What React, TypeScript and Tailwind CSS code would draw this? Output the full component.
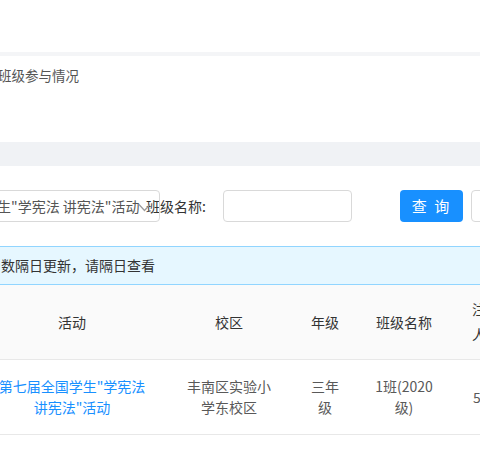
import React from "react";

export default function App() {
  const font = { fontFamily: '"Noto Sans CJK SC", "Noto Sans", sans-serif' };
  return (
    <div
      className="w-[480px] h-[454px] overflow-hidden bg-white relative text-[14px]"
      style={font}
    >
      <div className="h-[52px] bg-white" />
      <div className="h-[4px] bg-[#f4f5f7]" />
      <div className="h-[86px] bg-white pt-[9px]">
        <div className="ml-[-2px] leading-[21px] text-[13.5px] text-[#555]">班级参与情况</div>
      </div>
      <div className="h-[24px] bg-[#f0f2f5]" />
      <div className="bg-white pt-[24px]">
        <div className="flex items-center h-[32px] whitespace-nowrap">
          <div className="relative shrink-0 ml-[-20px] w-[180px] h-[32px] border border-[#d9d9d9] rounded-[4px] text-[#555]">
            <div className="absolute inset-0 overflow-hidden flex items-center pl-[16px]">
              <span>生"学宪法 讲宪法"活动</span>
            </div>
            <svg className="absolute z-10 left-[157px] top-[12px]" width="13" height="9" viewBox="0 0 13 9">
              <path d="M1 1.5 L6.5 7.5 L12 1.5" fill="none" stroke="#9a9a9a" strokeWidth="1.2" />
            </svg>
          </div>
          <div className="shrink-0 ml-[-14px] text-[#333] w-[77px]">班级名称:</div>
          <div className="shrink-0 w-[129px] h-[32px] border border-[#d9d9d9] rounded-[4px]" />
          <div className="shrink-0 ml-[48px] w-[63px] h-[32px] rounded-[4px] bg-[#1890ff] text-white flex items-center justify-center text-[15px] tracking-[2px]">
            查 询
          </div>
          <div className="ml-[8px] w-[60px] shrink-0 h-[32px] rounded-[4px] border border-[#d9d9d9] bg-white" />
        </div>
        <div className="mt-[24px] h-[39px] bg-[#e6f7ff] border-y border-[#91d5ff] flex items-center pl-[1px] text-[#333]">
          数隔日更新，请隔日查看
        </div>
        <div className="ml-[-22px] grid grid-cols-[188px_126px_66px_92px_100px] w-[572px]">
          <div className="h-[75px] bg-[#fafafa] border-b border-[#e8e8e8] flex items-center justify-center px-[16px] text-[#333] leading-[21px]">活动</div>
          <div className="h-[75px] bg-[#fafafa] border-b border-[#e8e8e8] flex items-center justify-center px-[16px] text-[#333] leading-[21px]">校区</div>
          <div className="h-[75px] bg-[#fafafa] border-b border-[#e8e8e8] flex items-center justify-center px-[16px] text-[#333] leading-[21px]">年级</div>
          <div className="h-[75px] bg-[#fafafa] border-b border-[#e8e8e8] flex items-center justify-center px-[10px] text-[#333] leading-[21px] whitespace-nowrap">班级名称</div>
          <div className="h-[75px] bg-[#fafafa] border-b border-[#e8e8e8] flex flex-col justify-center pl-[22px] text-[#333] leading-[25px]">
            <span>注册</span>
            <span>人数</span>
          </div>

          <div className="h-[75px] border-b border-[#e8e8e8] flex items-center justify-center px-[16px] text-center text-[#1890ff] leading-[21px]">
            第七届全国学生"学宪法 讲宪法"活动
          </div>
          <div className="h-[75px] border-b border-[#e8e8e8] flex items-center justify-center px-[16px] text-center text-[#595959] leading-[21px]">
            丰南区实验小学东校区
          </div>
          <div className="h-[75px] border-b border-[#e8e8e8] flex items-center justify-center px-[19px] text-center text-[#595959] leading-[21px]">
            三年级
          </div>
          <div className="h-[75px] border-b border-[#e8e8e8] flex items-center justify-center px-[16px] text-center text-[#595959] leading-[21px]">
            1班(2020级)
          </div>
          <div className="h-[75px] border-b border-[#e8e8e8] flex items-center pl-[23px] text-[#595959] leading-[21px]">
            5
          </div>
        </div>
      </div>
    </div>
  );
}
